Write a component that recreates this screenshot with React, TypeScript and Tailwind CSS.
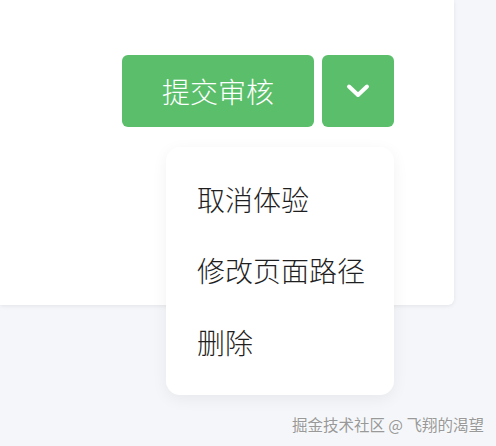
const font = { fontFamily: '"Noto Sans CJK SC", "Noto Sans", sans-serif' };

export default function App() {
  const menuItems = ['取消体验', '修改页面路径', '删除'];

  return (
    <div className="relative w-[496px] h-[446px] overflow-hidden bg-[#f4f6f9]" style={font}>
      <div className="w-[454px] h-[305px] bg-white rounded-br-[6px] shadow-[0_1px_4px_rgba(0,0,0,0.08)]">
        <div className="flex justify-end gap-2 pt-[55px] pr-[60px]">
          <button className="w-[192px] h-[72px] rounded-[6px] bg-[#5abe6b] text-white text-[28px] font-light">
            提交审核
          </button>
          <button className="w-[72px] h-[72px] rounded-[6px] bg-[#5abe6b] flex items-center justify-center">
            <svg width="24" height="16" viewBox="0 0 24 16" fill="none">
              <path d="M3 3.5 L12 12 L21 3.5" stroke="white" strokeWidth="4" strokeLinecap="round" strokeLinejoin="round" />
            </svg>
          </button>
        </div>
      </div>

      <div className="absolute left-[166px] top-[147px] w-[228px] h-[248px] bg-white rounded-[14px] shadow-[0_4px_16px_rgba(0,0,0,0.06)] flex flex-col pt-[16px]">
        {menuItems.map((item, i) => (
          <div
            key={item}
            className={`${i === 2 ? 'h-[73px]' : 'h-[71px]'} flex items-center pl-[31px] text-[28px] font-light text-[#1f1f1f]`}
          >
            {item}
          </div>
        ))}
      </div>

      <div className="absolute right-[12px] top-[413px] text-[15.5px] text-[#999] [text-shadow:0_0_2px_white]">
        掘金技术社区 @ 飞翔的渴望
      </div>
    </div>
  );
}
